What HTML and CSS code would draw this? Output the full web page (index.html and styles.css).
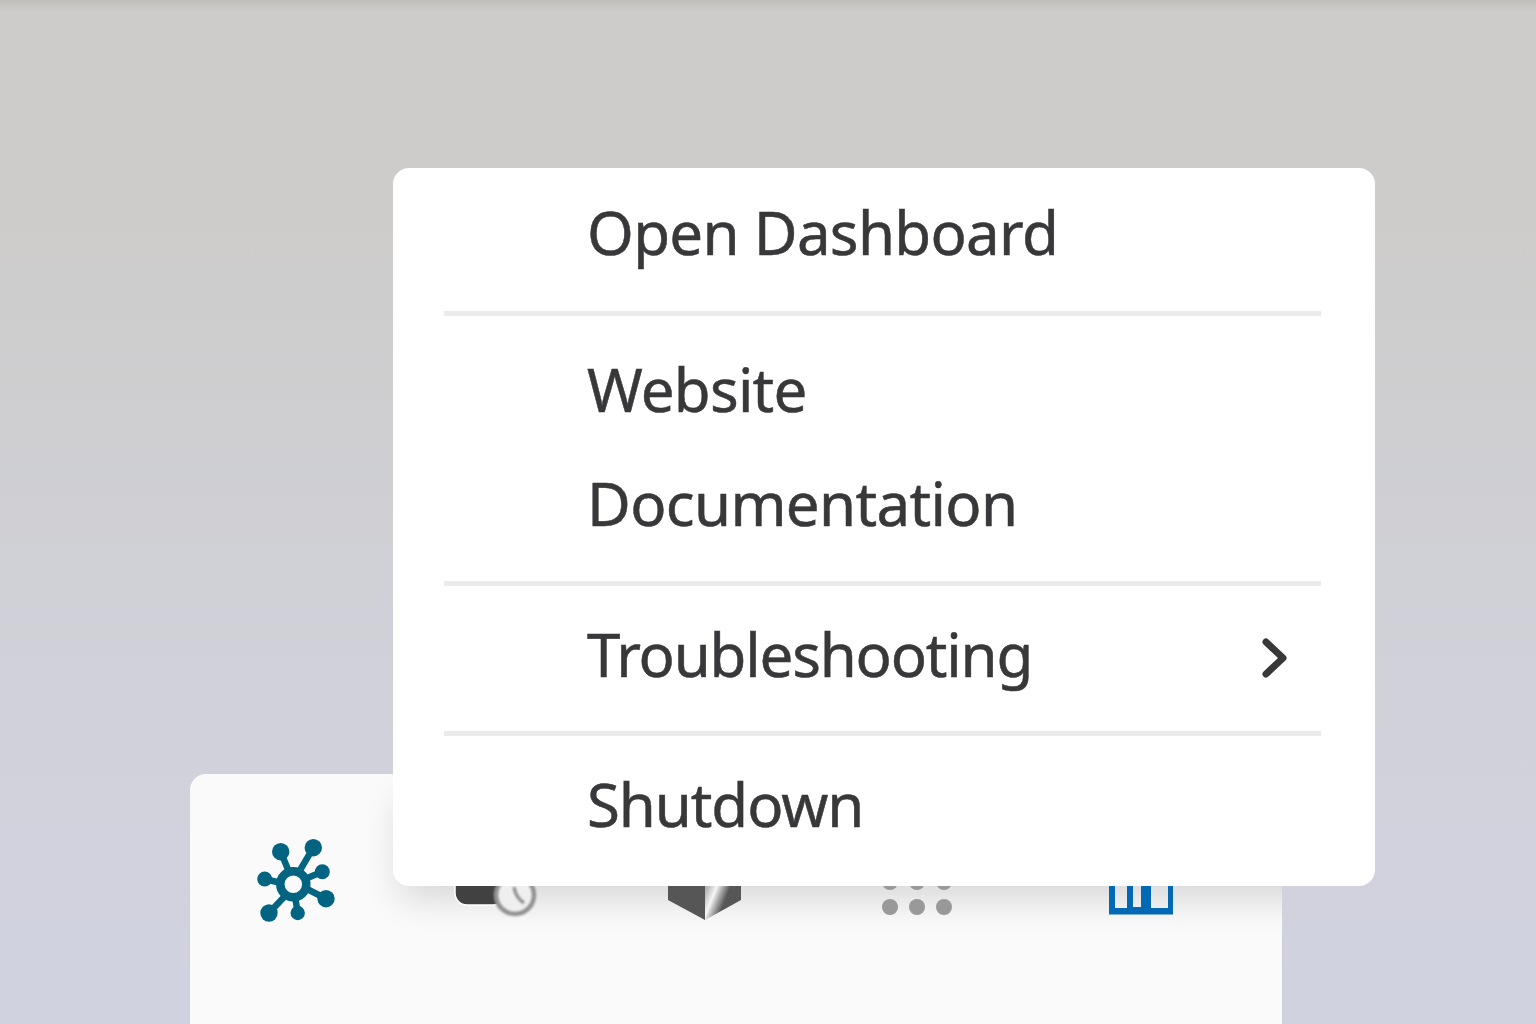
FILE: index.html
```html
<!DOCTYPE html>
<html lang="en">
<head>
    <meta charset="UTF-8">
    <title>Tray Menu</title>
    <link rel="stylesheet" href="styles.css">
</head>
<body>
    <div class="desktop">
        <!-- tray flyout behind the menu -->
        <div class="tray">
            <div class="menu-shade"></div>
            <svg class="tray-icon icon-hub" width="84" height="90" viewBox="0 0 84 90">
                <g fill="#026480">
                    <circle cx="27.7" cy="17.7" r="8.7"/>
                    <circle cx="60.3" cy="13.7" r="8.7"/>
                    <circle cx="69.3" cy="37.7" r="7.5"/>
                    <circle cx="11.7" cy="45" r="7.5"/>
                    <circle cx="73" cy="64.7" r="8.7"/>
                    <circle cx="16" cy="79" r="8.7"/>
                    <circle cx="44.7" cy="79" r="7.2"/>
                </g>
                <g stroke="#026480" fill="none">
                    <path stroke-width="6.500" d="M27.7 17.7L36 38M60.3 13.7L46 38M69.3 37.7L52 45M11.7 45L28 49M73 64.7L54 55M16 79L32 62M44.7 79L42 62"/>
                    <circle stroke-width="8.500" cx="40.3" cy="50.3" r="13"/>
                </g>
            </svg>
            <svg class="tray-icon icon-clock" width="90" height="60" viewBox="0 0 90 60">
                <rect x="2" y="-30" width="50" height="50" rx="12" fill="#414141" stroke="#fff" stroke-width="1.5"/>
                <g class="clock-face">
                    <circle cx="62" cy="10" r="19" fill="#efefef" stroke="#929292" stroke-width="4.5"/>
                    <path d="M61 2Q63 13 71 18" fill="none" stroke="#929292" stroke-width="3.5"/>
                </g>
            </svg>
            <svg class="tray-icon icon-box" width="78" height="60" viewBox="0 0 78 60">
                <defs>
                    <linearGradient id="boxFace" gradientUnits="userSpaceOnUse" x1="37" y1="13" x2="57" y2="21">
                        <stop offset="0" stop-color="#b5b5b5"/>
                        <stop offset="0.4" stop-color="#f6f6f6"/>
                        <stop offset="0.65" stop-color="#b0b0b0"/>
                        <stop offset="1" stop-color="#565656"/>
                    </linearGradient>
                </defs>
                <path d="M2 0H39V35L2 15Z" fill="#565656"/>
                <path d="M39 0H75V15L39 35Z" fill="url(#boxFace)"/>
            </svg>
            <div class="tray-icon dots">
                <span></span><span></span><span></span>
                <span></span><span></span><span></span>
            </div>
            <svg class="tray-icon icon-bars" width="66" height="60" viewBox="0 0 66 60">
                <path d="M0 0H64V29.500H0ZM6 0V23H18V0ZM24 0V22H32V0ZM42 0V23H59V0Z" fill="#0369b5" fill-rule="evenodd"/>
            </svg>
        </div>

        <div class="menu">
            <div class="menu-item item-open">Open Dashboard</div>
            <hr class="sep">
            <div class="menu-item item-website">Website</div>
            <div class="menu-item item-docs">Documentation</div>
            <hr class="sep">
            <div class="menu-item item-trouble">
                <span>Troubleshooting</span>
                <svg class="chevron" width="26" height="42" viewBox="0 0 26 42">
                    <path d="M4 5L21 21L4 37" fill="none" stroke="#38383a" stroke-width="7" stroke-linecap="round" stroke-linejoin="round"/>
                </svg>
            </div>
            <hr class="sep">
            <div class="menu-item item-shutdown">Shutdown</div>
        </div>
    </div>
</body>
</html>
```

FILE: styles.css
```css
html, body {
    margin: 0;
    padding: 0;
}
body {
    width: 1536px;
    height: 1024px;
    overflow: hidden;
    font-family: "Noto Sans", "Open Sans", sans-serif;
}
.desktop {
    position: relative;
    width: 1536px;
    height: 1024px;
    background: linear-gradient(#c0bebb 0, #cdccca 12px, #cdccca 200px, #d0d1d8 640px, #d1d2e0 1024px);
    overflow: hidden;
}
.tray {
    position: absolute;
    left: 190px;
    top: 774px;
    width: 1092px;
    height: 270px;
    background: #fafafa;
    border-radius: 16px 16px 0 0;
    overflow: hidden;
}
/* menu shadow only falls on the tray, not on the wallpaper */
.menu-shade {
    position: absolute;
    left: 203px;
    top: 0;
    width: 982px;
    height: 111px;
    border-radius: 16px;
    box-shadow: 0 20px 36px -6px rgba(0, 0, 0, 0.14);
}
.tray-icon {
    position: absolute;
}
.icon-hub {
    left: 63px;
    top: 60px;
}
.icon-clock {
    left: 263px;
    top: 111px;
}
.clock-face {
    filter: blur(0.8px);
}
.icon-box {
    left: 476px;
    top: 111px;
}
.dots {
    left: 692px;
    top: 100px;
    display: grid;
    grid-template-columns: repeat(3, 16px);
    column-gap: 11px;
    row-gap: 9px;
}
.dots span {
    width: 16px;
    height: 16px;
    border-radius: 50%;
    background: #999;
}
.icon-bars {
    left: 919px;
    top: 111px;
}
.menu {
    position: absolute;
    left: 393px;
    top: 168px;
    width: 982px;
    height: 718px;
    box-sizing: border-box;
    padding: 0 54px 0 51px;
    background: #fff;
    border-radius: 16px;
    display: flex;
    flex-direction: column;
}
.menu-item {
    display: flex;
    align-items: center;
    justify-content: space-between;
    padding-left: 143px;
    color: #38383a;
    font-size: 60px;
    line-height: 80px;
    letter-spacing: -0.65px;
    -webkit-text-stroke: 0.5px #38383a;
}
.sep {
    width: 100%;
    height: 5px;
    margin: 0;
    border: none;
    background: #ebebeb;
    flex: none;
}
.item-open {
    margin-top: 24px;
    margin-bottom: 39px;
    letter-spacing: -0.7px;
}
.item-website {
    margin-top: 33px;
    letter-spacing: -0.8px;
}
.item-docs {
    margin-top: 34px;
    margin-bottom: 38px;
}
.item-trouble {
    margin-top: 28px;
    margin-bottom: 37px;
    letter-spacing: -1.2px;
}
.item-shutdown {
    margin-top: 28px;
    letter-spacing: -1.1px;
}
.chevron {
    margin-top: 8px;
    margin-right: 33px;
}
```
